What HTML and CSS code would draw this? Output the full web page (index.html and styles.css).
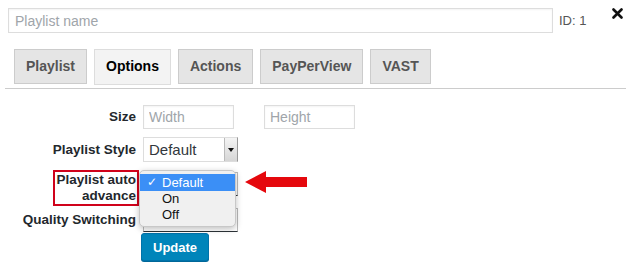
FILE: index.html
```html
<!DOCTYPE html>
<html lang="en">
<head>
    <meta charset="UTF-8">
    <meta name="viewport" content="width=device-width, initial-scale=1.0">
    <title>Playlist Options</title>
    <link rel="stylesheet" href="styles.css">
</head>
<body>

    <!-- Title row -->
    <div class="title-row">
        <input type="text" class="name-input" placeholder="Playlist name">
        <span class="item-id">ID: 1</span>
        <span class="close-btn">
            <svg width="11" height="11" viewBox="0 0 11 11">
                <path d="M1.5 1.5 L9.5 9.5 M9.5 1.5 L1.5 9.5" stroke="#111" stroke-width="2.6" stroke-linecap="round"/>
            </svg>
        </span>
    </div>

    <!-- Tabs -->
    <div class="tabs">
        <span class="tab">Playlist</span>
        <span class="tab tab-active">Options</span>
        <span class="tab">Actions</span>
        <span class="tab">PayPerView</span>
        <span class="tab">VAST</span>
    </div>

    <!-- Options form -->
    <div class="form">
        <div class="row row-size">
            <label class="row-label">Size</label>
            <div class="field field-pair">
                <input type="text" class="small-input" placeholder="Width">
                <input type="text" class="small-input height-input" placeholder="Height">
            </div>
        </div>

        <div class="row row-style">
            <label class="row-label">Playlist Style</label>
            <div class="field">
                <div class="select">
                    <span class="select-value">Default</span>
                    <span class="select-arrow"></span>
                </div>
            </div>
        </div>

        <div class="row row-auto">
            <label class="row-label"><span class="marked">Playlist auto advance</span></label>
            <div class="field field-open">
                <div class="select select-under"></div>
                <!-- open dropdown -->
                <ul class="dropdown">
                    <li class="option option-selected"><span class="check">&#10003;</span>Default</li>
                    <li class="option">On</li>
                    <li class="option">Off</li>
                </ul>
                <svg class="pointer" width="62" height="22" viewBox="0 0 62 22">
                    <polygon points="0,11 21,0 21,6 62,6 62,16 21,16 21,22" fill="#e5080d"/>
                </svg>
            </div>
        </div>

        <div class="row row-quality">
            <label class="row-label">Quality Switching</label>
            <div class="field">
                <div class="select select-under"></div>
            </div>
        </div>

        <div class="row row-submit">
            <button class="update-btn">Update</button>
        </div>
    </div>

</body>
</html>
```

FILE: styles.css
```css
body {
    font-family: "Liberation Sans", Arial, sans-serif;
    margin: 0;
    padding: 8px;
    background-color: #fff;
    color: #23282d;
}
.title-row {
    display: flex;
    align-items: center;
}
.name-input {
    box-sizing: border-box;
    width: 545px;
    height: 25px;
    margin: 0;
    padding: 0 6px;
    font-family: inherit;
    font-size: 14px;
    border: 1px solid #ddd;
    box-shadow: inset 0 1px 2px rgba(0, 0, 0, 0.05);
}
.name-input::placeholder,
.small-input::placeholder {
    color: #a0a5aa;
}
.item-id {
    margin-left: 6px;
    font-size: 13px;
    color: #555;
}
.close-btn {
    align-self: flex-start;
    margin-left: auto;
    margin-right: 1px;
    line-height: 0;
}
.tabs {
    display: flex;
    align-items: flex-start;
    gap: 7px;
    height: 39px;
    margin: 16px -2px 0 -3px;
    padding-left: 9px;
    border-bottom: 1px solid #ccc;
}
.tab {
    display: inline-block;
    height: 33px;
    line-height: 33px;
    padding: 0 11px;
    font-size: 14px;
    font-weight: bold;
    color: #555;
    background: #e5e5e5;
    border: 1px solid #ccc;
}
.tab-active {
    height: 34px;
    color: #000;
    background: #f3f3f3;
    border-color: #ddd;
}
.form {
    margin-top: 16px;
}
.row {
    display: flex;
    align-items: center;
}
.row-label {
    width: 128px;
    margin-right: 7px;
    text-align: right;
    font-size: 13.5px;
    font-weight: bold;
    line-height: 16px;
}
.field-pair {
    display: flex;
}
.small-input {
    box-sizing: border-box;
    width: 91px;
    height: 24px;
    margin: 0;
    padding: 0 5px;
    font-family: inherit;
    font-size: 14px;
    border: 1px solid #ddd;
    box-shadow: inset 0 1px 2px rgba(0, 0, 0, 0.05);
}
.height-input {
    margin-left: 30px;
}
.row-style {
    margin-top: 8px;
}
.select {
    box-sizing: border-box;
    display: flex;
    width: 95px;
    height: 25px;
    background: #fff;
    border: 1px solid #ddd;
    border-right-color: #999;
}
.select-value {
    flex: 1;
    padding-left: 5px;
    font-size: 15px;
    line-height: 23px;
    color: #32373c;
}
.select-arrow {
    position: relative;
    width: 12px;
    background: linear-gradient(#f4f4f4, #d6d6d6);
    border-left: 1px solid #bbb;
}
.select-arrow::after {
    content: "";
    position: absolute;
    top: 10px;
    left: 3px;
    border-left: 3px solid transparent;
    border-right: 3px solid transparent;
    border-top: 4px solid #111;
}
.row-auto {
    margin-top: 8px;
    align-items: flex-start;
}
.marked {
    display: inline-block;
    width: 80px;
    margin-right: -3px;
    padding: 0 1px;
    border: 2px solid #d0021b;
}
.field-open {
    position: relative;
    padding-top: 2px;
}
.select-under {
    height: 24px;
    border-color: #bbb;
    border-bottom-color: #2c3338;
}
.dropdown {
    position: absolute;
    top: 0;
    left: -4px;
    z-index: 2;
    width: 95px;
    margin: 0;
    padding: 3px 0 3px;
    list-style: none;
    background: #f0f0f0;
    border: 1px solid #c8c8c8;
    border-radius: 5px;
    box-shadow: 0 2px 6px rgba(0, 0, 0, 0.25);
}
.option {
    height: 16px;
    padding-left: 22px;
    font-size: 13px;
    line-height: 16px;
    color: #111;
}
.option-selected {
    position: relative;
    height: 17px;
    line-height: 17px;
    color: #fff;
    background: #3b8ff6;
}
.check {
    position: absolute;
    left: 7px;
    font-family: "DejaVu Sans", sans-serif;
    font-size: 12px;
}
.pointer {
    position: absolute;
    top: 1px;
    left: 102px;
    z-index: 2;
}
.row-quality {
    margin-top: 2px;
}
.row-submit {
    margin-top: 1px;
    padding-left: 133px;
}
.update-btn {
    height: 28px;
    padding: 0 11px;
    font-family: inherit;
    font-size: 13px;
    font-weight: bold;
    color: #fff;
    background: #0085ba;
    border: 1px solid #0073aa;
    border-radius: 3px;
    box-shadow: 0 1px 0 #006799;
}
```
